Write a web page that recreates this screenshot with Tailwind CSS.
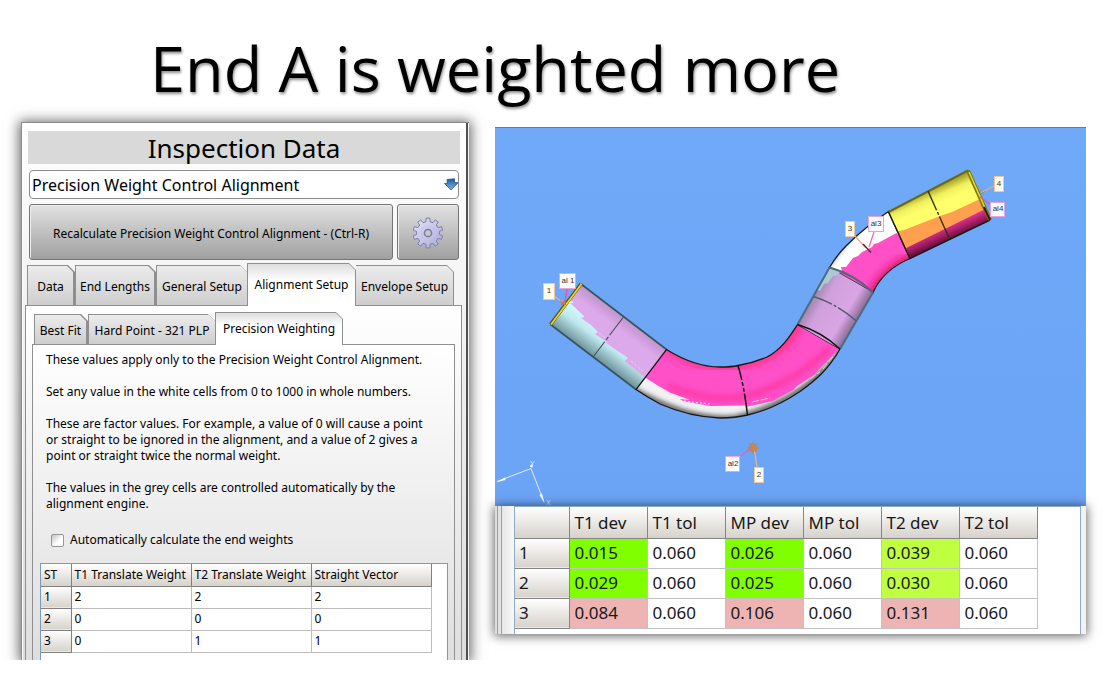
<!DOCTYPE html>
<html lang="en">
<head>
    <meta charset="UTF-8">
    <meta name="viewport" content="width=device-width, initial-scale=1.0">
    <title>End A is weighted more</title>
    <script src="https://cdn.jsdelivr.net/npm/@tailwindcss/browser@4"></script>
</head>
<body class="bg-white text-black font-['Noto_Sans','DejaVu_Sans_Condensed',sans-serif] overflow-hidden">
    <h1 class="pt-6 pl-[150px] h-[122px] whitespace-nowrap font-['Open_Sans',sans-serif] text-[63px] leading-[88px] [text-shadow:1px_2px_3px_rgba(0,0,0,0.45)]">End A is weighted more</h1>

    <main class="flex items-start pl-[21px] pr-5 gap-[26px]">
        <!-- Inspection panel -->
        <section class="w-[448px] shrink-0 h-[538px] overflow-hidden bg-linear-to-b from-white to-[#dcdcdc] border-t border-l border-[#8a8a8a] shadow-[0_1px_12px_2px_rgba(0,0,0,0.6)] flex">
            <div class="flex-1 min-w-0 border-l border-white pt-2 pl-[2px] pr-1 flex flex-col">
                <h2 class="ml-[3px] mr-[2px] h-[33px] bg-[#d9d9d9] text-center text-[26px] leading-[34px]">Inspection Data</h2>
                <div class="relative mt-[6px] ml-1 mr-[3px]">
                    <select aria-label="Alignment type" class="appearance-none block w-full h-[29px] rounded border border-[#8c8c8c] bg-white pl-[2px] text-[16px]">
                        <option>Precision Weight Control Alignment</option>
                    </select>
                    <svg class="absolute right-0 top-2 w-4 h-[13px] pointer-events-none" viewBox="0 0 16 13">
                        <defs><linearGradient id="arrow" x2="0" y2="1"><stop stop-color="#1d5a9c"/><stop offset="1" stop-color="#7cb8ea"/></linearGradient></defs>
                        <path d="M4 1.500 L11.500 .8 L11.500 4.500 L15 4.800 L8 12 L1.500 5.500 L4.500 5 Z" fill="url(#arrow)" stroke="#1f4f8a" stroke-width=".8"/>
                    </svg>
                </div>
                <div class="mt-[5px] ml-1 mr-[3px] flex gap-1">
                    <button class="flex-1 h-14 pt-[3px] rounded-[3px] border border-[#747474] bg-linear-to-b from-[#e2e2e2] to-[#a0a0a0] text-[12px] shadow-[inset_1px_1px_0_#eee] whitespace-nowrap">Recalculate Precision Weight Control Alignment - (Ctrl-R)</button>
                    <button aria-label="Settings" class="w-[62px] h-14 pt-[2px] rounded-[3px] border border-[#747474] bg-linear-to-b from-[#e2e2e2] to-[#a0a0a0] shadow-[inset_1px_1px_0_#eee] flex items-center justify-center">
                        <svg class="w-8 h-8" viewBox="-16 -16 32 32">
                            <defs><linearGradient id="gear" x1="0" y1="0" x2="1" y2="1"><stop stop-color="#e4e4fa"/><stop offset="1" stop-color="#a8a8da"/></linearGradient></defs>
                            <path id="gearShape" fill="url(#gear)" stroke="#8080ac" stroke-width="1" stroke-linejoin="round"/>
                            <circle r="7" fill="none" stroke="#c4c4ea" stroke-width="1"/>
                            <circle r="3.600" fill="#c8c8c8" stroke="#7b7ba0" stroke-width="1.500"/>
                        </svg>
                    </button>
                </div>

                <div class="mt-[3px] ml-[2px] flex items-end text-[12px] relative z-10 -mb-px" role="tablist">
                    <button role="tab" class="w-12 h-[41px] pt-px pl-px pr-[2px] pb-px bg-[#8f8f8f] [clip-path:polygon(0_0,calc(100%-7px)_0,100%_7px,100%_100%,0_100%)]"><span class="flex items-center justify-center h-full whitespace-nowrap bg-linear-to-b from-[#ececec] to-[#cecece] [clip-path:polygon(0_0,calc(100%-6px)_0,100%_6px,100%_100%,0_100%)] pt-[3px]">Data</span></button>
                    <button role="tab" class="w-[81px] h-[41px] pt-px pl-px pr-[2px] pb-px bg-[#8f8f8f] [clip-path:polygon(0_0,calc(100%-7px)_0,100%_7px,100%_100%,0_100%)]"><span class="flex items-center justify-center h-full whitespace-nowrap bg-linear-to-b from-[#ececec] to-[#cecece] [clip-path:polygon(0_0,calc(100%-6px)_0,100%_6px,100%_100%,0_100%)] pt-[3px]">End Lengths</span></button>
                    <button role="tab" class="w-[91px] h-[41px] pt-px pl-px pb-px bg-[#8f8f8f] [clip-path:polygon(0_0,calc(100%-7px)_0,100%_7px,100%_100%,0_100%)]"><span class="flex items-center justify-center h-full whitespace-nowrap bg-linear-to-b from-[#ececec] to-[#cecece] [clip-path:polygon(0_0,calc(100%-6px)_0,100%_6px,100%_100%,0_100%)] pt-[3px]">General Setup</span></button>
                    <button role="tab" aria-selected="true" class="w-[109px] h-[43px] pt-px pl-px pr-px bg-[#8f8f8f] [clip-path:polygon(0_0,calc(100%-7px)_0,100%_7px,100%_100%,0_100%)]"><span class="flex items-center justify-center h-full whitespace-nowrap bg-linear-to-b from-[#dedede] to-white to-40% [clip-path:polygon(0_0,calc(100%-6px)_0,100%_6px,100%_100%,0_100%)]">Alignment Setup</span></button>
                    <button role="tab" class="w-[98px] h-[41px] pt-px pr-px pb-px bg-[#8f8f8f] [clip-path:polygon(0_0,calc(100%-7px)_0,100%_7px,100%_100%,0_100%)]"><span class="flex items-center justify-center h-full whitespace-nowrap bg-linear-to-b from-[#ececec] to-[#cecece] [clip-path:polygon(0_0,calc(100%-6px)_0,100%_6px,100%_100%,0_100%)] pt-[3px]">Envelope Setup</span></button>
                </div>

                <div class="flex-1 border-t border-l border-r border-[#8f8f8f] bg-linear-to-b from-white to-[#dcdcdc] pt-[6px] px-[6px] flex flex-col">
                    <div class="ml-[2px] flex items-end text-[12px] relative z-10 -mb-px" role="tablist">
                        <button role="tab" class="w-[54px] h-[31px] pt-px pl-px pr-[2px] pb-px bg-[#8f8f8f] [clip-path:polygon(0_0,calc(100%-7px)_0,100%_7px,100%_100%,0_100%)]"><span class="flex items-center justify-center h-full whitespace-nowrap bg-linear-to-b from-[#ececec] to-[#cecece] [clip-path:polygon(0_0,calc(100%-6px)_0,100%_6px,100%_100%,0_100%)] pt-[3px]">Best Fit</span></button>
                        <button role="tab" class="w-[127px] h-[31px] pt-px pl-px pb-px bg-[#8f8f8f] [clip-path:polygon(0_0,calc(100%-7px)_0,100%_7px,100%_100%,0_100%)]"><span class="flex items-center justify-center h-full whitespace-nowrap bg-linear-to-b from-[#ececec] to-[#cecece] [clip-path:polygon(0_0,calc(100%-6px)_0,100%_6px,100%_100%,0_100%)] pt-[3px]">Hard Point - 321 PLP</span></button>
                        <button role="tab" aria-selected="true" class="w-32 h-[33px] pt-px pl-px pr-px bg-[#8f8f8f] [clip-path:polygon(0_0,calc(100%-7px)_0,100%_7px,100%_100%,0_100%)]"><span class="flex items-center justify-center h-full whitespace-nowrap bg-linear-to-b from-[#dedede] to-white to-40% [clip-path:polygon(0_0,calc(100%-6px)_0,100%_6px,100%_100%,0_100%)]">Precision Weighting</span></button>
                    </div>
                    <div class="flex-1 border-t border-l border-r border-[#8f8f8f] bg-linear-to-b from-white to-[#dcdcdc] pt-[7px] pl-[7px] pr-[6px]">
                        <div class="pl-[6px] text-[12px] leading-4 space-y-4">
                            <p>These values apply only to the Precision Weight Control Alignment.</p>
                            <p>Set any value in the white cells from 0 to 1000 in whole numbers.</p>
                            <p>These are factor values. For example, a value of 0 will cause a point<br>or straight to be ignored in the alignment, and a value of 2 gives a<br>point or straight twice the normal weight.</p>
                            <p>The values in the grey cells are controlled automatically by the<br>alignment engine.</p>
                        </div>
                        <label class="mt-5 ml-[11px] flex items-center gap-[6px] text-[12px] leading-4">
                            <input type="checkbox" class="appearance-none size-[13px] rounded-[2px] border border-[#969696] bg-linear-to-br from-[#c4c4c4] to-white to-60%">
                            Automatically calculate the end weights
                        </label>
                        <div class="mt-[15px] h-[120px] border border-[#7c9ab8] bg-white text-[12px]">
                            <table class="table-fixed w-[390px] border-collapse text-left whitespace-nowrap">
                                <colgroup><col class="w-[30px]"><col class="w-[120px]"><col class="w-[120px]"><col class="w-[120px]"></colgroup>
                                <thead>
                                    <tr class="h-[22px] bg-linear-to-b from-white to-[#d6d2cb]">
                                        <th class="font-normal p-0 pl-[3px] border-r border-b border-[#808080]">ST</th>
                                        <th class="font-normal p-0 pl-[3px] border-r border-b border-[#808080]">T1 Translate Weight</th>
                                        <th class="font-normal p-0 pl-[3px] border-r border-b border-[#808080]">T2 Translate Weight</th>
                                        <th class="font-normal p-0 pl-[3px] border-r border-b border-[#808080]">Straight Vector</th>
                                    </tr>
                                </thead>
                                <tbody>
                                    <tr class="h-[22px]">
                                        <th class="font-normal p-0 pl-[3px] border-r border-b border-[#808080] bg-linear-to-b from-white to-[#d6d2cb]">1</th>
                                        <td class="p-0 pl-[3px] border-r border-b border-[#bdbdbd]">2</td>
                                        <td class="p-0 pl-[3px] border-r border-b border-[#bdbdbd]">2</td>
                                        <td class="p-0 pl-[3px] border-r border-b border-[#bdbdbd]">2</td>
                                    </tr>
                                    <tr class="h-[22px]">
                                        <th class="font-normal p-0 pl-[3px] border-r border-b border-[#808080] bg-linear-to-b from-white to-[#d6d2cb]">2</th>
                                        <td class="p-0 pl-[3px] border-r border-b border-[#bdbdbd]">0</td>
                                        <td class="p-0 pl-[3px] border-r border-b border-[#bdbdbd]">0</td>
                                        <td class="p-0 pl-[3px] border-r border-b border-[#bdbdbd]">0</td>
                                    </tr>
                                    <tr class="h-[22px]">
                                        <th class="font-normal p-0 pl-[3px] border-r border-b border-[#808080] bg-linear-to-b from-white to-[#d6d2cb]">3</th>
                                        <td class="p-0 pl-[3px] border-r border-b border-[#bdbdbd]">0</td>
                                        <td class="p-0 pl-[3px] border-r border-b border-[#bdbdbd]">1</td>
                                        <td class="p-0 pl-[3px] border-r border-b border-[#bdbdbd]">1</td>
                                    </tr>
                                </tbody>
                            </table>
                        </div>
                    </div>
                </div>
            </div>
            <div class="w-[3px] border-l-2 border-[#505050] bg-[#f4f4f4]"></div>
        </section>

        <!-- Tube view and results -->
        <section class="flex-1 min-w-0 mt-[5px]">
            <svg class="block w-full" viewBox="495 127 591 379" font-family="Liberation Sans, sans-serif" font-size="8">
                <defs>
                    <linearGradient id="sky" x2="0" y2="1"><stop stop-color="#70a9f8"/><stop offset="1" stop-color="#6ca4f5"/></linearGradient>
                    <linearGradient id="lilac" gradientUnits="userSpaceOnUse" x1="623" y1="317" x2="593" y2="357"><stop stop-color="#c295cc"/><stop offset=".25" stop-color="#dca9ea"/><stop offset=".75" stop-color="#dca9ea"/><stop offset="1" stop-color="#a87fb0"/></linearGradient>
                    <linearGradient id="ice" gradientUnits="userSpaceOnUse" x1="623" y1="317" x2="593" y2="357"><stop offset=".4" stop-color="#d2fbff"/><stop offset=".65" stop-color="#c0e9ef"/><stop offset="1" stop-color="#6d9099"/></linearGradient>
                    <linearGradient id="lilac2" gradientUnits="userSpaceOnUse" x1="813" y1="296" x2="856" y2="321"><stop stop-color="#9f82ab"/><stop offset=".25" stop-color="#d0a0dc"/><stop offset=".75" stop-color="#d8a6e4"/><stop offset="1" stop-color="#8d6c98"/></linearGradient>
                    <linearGradient id="lemon" gradientUnits="userSpaceOnUse" x1="928" y1="191" x2="949" y2="239"><stop stop-color="#a8a52c"/><stop offset=".15" stop-color="#f0ee5c"/><stop offset=".3" stop-color="#ffff6c"/></linearGradient>
                    <linearGradient id="wine" gradientUnits="userSpaceOnUse" x1="928" y1="191" x2="949" y2="239"><stop offset=".72" stop-color="#f8379a"/><stop offset="1" stop-color="#6e0f40"/></linearGradient>
                    <linearGradient id="whiteBend" gradientUnits="userSpaceOnUse" x1="843" y1="238" x2="866" y2="256"><stop stop-color="#a8a8a8"/><stop offset=".4" stop-color="#fff"/></linearGradient>
                    <filter id="soft" x="-10%" y="-10%" width="120%" height="120%"><feGaussianBlur stdDeviation="4"/></filter>
                    <filter id="softer" x="-10%" y="-10%" width="120%" height="120%"><feGaussianBlur stdDeviation="2.500"/></filter>
                    <path id="bendA" d="M666.5 349.5 C685 361 702 367 720 367 Q732 367 738 365.5 Q753 363 767 357 C782 349 790 336 797.5 324.5 L840 349 C828 370 816 380 800 391.5 Q774 409 747.5 415 Q735 418 720 418 Q690 417 660 404 Q647 397 636 389.5 Z"/>
                    <path id="bendB" d="M829.5 267.5 Q837 255 846.5 245.5 Q865 227 888.5 211.5 L910 258.5 Q883 270 873 292.5 Z"/>
                    <clipPath id="clipA"><use href="#bendA"/></clipPath>
                    <clipPath id="clipB"><use href="#bendB"/></clipPath>
                </defs>
                <rect x="495" y="127" width="591" height="379" fill="url(#sky)"/>
                <path d="M495 127.500H1086" stroke="#4c80c8" stroke-width="1"/>

                <!-- straight 1 -->
                <path d="M581 284 L666.500 349.500 L636 389.500 L550.500 324.500 Z" fill="url(#lilac)"/>
                <path d="M569 299 L574 303 L570 303 L584.500 316.500 L581 318 L591 325 L598 332 L595 334 L607 342 L606 343 L628 358 L624.500 361 L645 377.500 L636 389.500 L550.500 324.500 Z" fill="url(#ice)"/>
                <path d="M599 333 L606 338 M631 361 L643 371" stroke="#e8d8f2" stroke-width=".8" stroke-dasharray="3 1.500"/>
                <path d="M581 284 L666.500 349.500 M550.500 324.500 L636 389.500" stroke="#31565f" stroke-width="1.600"/>
                <path d="M623.500 317 L612 332 M603 344 L593.500 356.500" stroke="#46525c" stroke-width="1.200"/>
                <path d="M612 332 L603 344" stroke="#46525c" stroke-width="1.200" stroke-dasharray="4 2"/>
                <path d="M581 284 L550.500 324.500" stroke="#4c4b18" stroke-width="3.400"/>
                <path d="M581.500 284 L551 324.500" stroke="#f0d81c" stroke-width="1.800"/>

                <!-- bend 1 -->
                <use href="#bendA" fill="#f2f2f2"/>
                <g clip-path="url(#clipA)">
                    <path d="M634 390 Q690 422 735 418 Q804 402 842 349" fill="none" stroke="#484848" stroke-width="5" filter="url(#softer)"/>
                    <path d="M660 345 L645 377.500 Q658 386 670 392.500 L690 400 L680 399 L683 401 L710 406 L747 405.500 L745 407 L773 401 L793 390 L797 386 L814 375 L827 361 L839 349 L797 320 L780 330 L720 360 Z" fill="#ff50c8"/>
                    <path d="M664 345 Q695 364 720 365 Q780 364 798 322" fill="none" stroke="#ff2c78" stroke-width="9" filter="url(#soft)"/>
                    <path d="M668 386 Q704 400 735 398 Q790 388 830 348" fill="none" stroke="#ff3098" stroke-width="6" opacity=".7" filter="url(#softer)"/>
                    <path d="M752 402 L770 398 M795 389 L820 372 M823 369 L835 354" stroke="#f2c6d9" stroke-width="1" stroke-dasharray="7 2"/>
                    <path d="M684 401 L710 404" stroke="#ffe3f2" stroke-width="1" stroke-dasharray="2 2"/>
                </g>
                <use href="#bendA" fill="none" stroke="#171717" stroke-width="1.300"/>
                <path d="M738 365.500 Q744 385 747.500 415" fill="none" stroke="#111" stroke-width="1.500" stroke-dasharray="15 2 4 2 4 2 30"/>

                <!-- bend 2 -->
                <use href="#bendB" fill="url(#whiteBend)"/>
                <g clip-path="url(#clipB)">
                    <path d="M836 273 L842 271 L841 267 L846 267 L853 258 L858 256 L862 252 L872 247 L874 244 L878 243 L896.500 233 L915 255 L880 297 Z" fill="#ff50c8"/>
                    <path d="M872 298 Q884 272 914 258" fill="none" stroke="#e01868" stroke-width="12" filter="url(#soft)"/>
                </g>
                <use href="#bendB" fill="none" stroke="#171717" stroke-width="1.300"/>

                <!-- straight 2 -->
                <path d="M829.500 267.500 L873 292.500 L840 349 L797.500 324.500 Z" fill="url(#lilac2)"/>
                <path d="M829.500 267.500 L841 271 L836 276 L833 276 L828 283 L824 284 L820 291 L818 290 L813.500 296.500 Z" fill="#a9cbd4"/>
                <path d="M829.500 267.500 L797.500 324.500 M873 292.500 L840 349" stroke="#4b6d80" stroke-width="2"/>
                <path d="M829.500 267.500 Q854 274 873 292.500" fill="none" stroke="#4b6a78" stroke-width="2"/>
                <path d="M813.500 296.500 Q837 304 856.500 321" fill="none" stroke="#4e5d70" stroke-width="1.400" stroke-dasharray="20 2 3 2 40"/>
                <path d="M797.500 324.500 Q822 332 840 349" fill="none" stroke="#111" stroke-width="1.500"/>

                <!-- straight 3 -->
                <path d="M888.500 212 L968 170.500 L990 220 L910 258.500 Z" fill="url(#lemon)"/>
                <path d="M897 231.500 L904 230 L940 216 L952 212 L980 199 L985 209 L906 248 Z" fill="#ffa050"/>
                <path d="M906 248 L985 209 L990 220 L910 258.500 Z" fill="url(#wine)"/>
                <path d="M888.500 212 L968 170.500" stroke="#6a6a12" stroke-width="2"/>
                <path d="M888.500 212 L910 258.500 L990 220" fill="none" stroke="#191919" stroke-width="1.500"/>
                <path d="M928 191 L949.500 239" stroke="#33300a" stroke-width="1.400" stroke-dasharray="21 2 3 2 40"/>
                <path d="M968 170.500 L990 220" stroke="#77760a" stroke-width="4"/>
                <path d="M969 172 L989 217" stroke="#eae51e" stroke-width="1.400"/>
                <path d="M984 207 L990 220" stroke="#3a1620" stroke-width="2"/>

                <!-- leaders -->
                <g fill="none" stroke-width="1.200">
                    <path d="M554 296 L565 304" stroke="#f0a890"/>
                    <path d="M567 289 L565 303" stroke="#f050a0"/>
                    <path d="M560 301 L566 305 M561 305 L566 300" stroke="#d8742c"/>
                    <path d="M854 235 L866 248" stroke="#f0a080"/>
                    <path d="M863 244 L871 252.500" stroke="#402820"/>
                    <path d="M874 232 L869 247" stroke="#ff58b4"/>
                    <path d="M994 186 L981 192.500" stroke="#f0a880"/>
                    <path d="M990 204 L980 197" stroke="#f050a0"/>
                    <path d="M741 456 L752 447" stroke="#e060b8"/>
                    <path d="M757 467 L754 448" stroke="#f0b090"/>
                </g>
                <g fill="none" stroke="#d08238" stroke-width="1">
                    <circle cx="753" cy="447.500" r="4"/><ellipse cx="753" cy="447.500" rx="2" ry="4"/>
                    <path d="M747 448 H759 M753 441 V454 M749 443 L757 452 M757 443 L749 452"/>
                    <path d="M980 190 L984 195 M980 196 L985 191"/>
                </g>

                <!-- labels -->
                <g fill="#fffdea" stroke="#eec8a0" stroke-width="1">
                    <rect x="543.500" y="283.500" width="11" height="16"/>
                    <rect x="845.500" y="221.500" width="9" height="15"/>
                    <rect x="994.500" y="176.500" width="9" height="15"/>
                    <rect x="754.500" y="467.500" width="9" height="15"/>
                </g>
                <g fill="#fffaff" stroke="#e4a4dc" stroke-width="1">
                    <rect x="559.500" y="273.500" width="16" height="15"/>
                    <rect x="868.500" y="216.500" width="15" height="15"/>
                    <rect x="990.500" y="202.500" width="14" height="14"/>
                    <rect x="725.500" y="456.500" width="14" height="15"/>
                </g>
                <g fill="#333" text-anchor="middle">
                    <text x="549" y="293">1</text>
                    <text x="568" y="283">al 1</text>
                    <text x="850" y="231">3</text>
                    <text x="876" y="226">al3</text>
                    <text x="999" y="186">4</text>
                    <text x="998" y="211">al4</text>
                    <text x="759" y="477">2</text>
                    <text x="733" y="466">al2</text>
                </g>

                <!-- axes -->
                <path d="M531 468.500 L497 481.500 M531 468.500 L544 502" fill="none" stroke="#dfeaff" stroke-width="1"/>
                <path d="M496 482.500 L505 477.500 L505.500 480 Z M544.500 503 L539.500 495 L542 493.500 Z" fill="#f4f8ff"/>
                <circle cx="531.500" cy="466" r="1.500" fill="#eef4ff"/>
                <g fill="#dfeaff" font-size="7"><text x="530" y="466">Y</text><text x="546" y="505">X</text></g>
            </svg>

            <div class="relative h-[128px] bg-[#f2f2f2] shadow-[0_1px_10px_1px_rgba(0,0,0,0.6)] flex">
                <div class="w-[19px] flex gap-[3px] pl-[2px] bg-linear-to-r from-[#dcdcdc] to-[#f8f8f8]">
                    <div class="w-px bg-[#9c9c9c]"></div>
                    <div class="w-px bg-[#9c9c9c]"></div>
                </div>
                <div class="flex-1 border-l border-r border-t border-[#8faac4] bg-white text-[17px] text-[#181818]">
                    <table class="table-fixed w-[522px] border-collapse text-left whitespace-nowrap">
                        <colgroup><col class="w-[54px]"><col class="w-[78px]"><col class="w-[78px]"><col class="w-[78px]"><col class="w-[78px]"><col class="w-[78px]"><col class="w-[78px]"></colgroup>
                        <thead>
                            <tr class="h-[31px] bg-linear-to-b from-white to-[#d6d2cb]">
                                <th class="p-0 border-r border-b border-[#858585]"></th>
                                <th class="font-normal p-0 pl-[5px] border-r border-b border-[#858585]">T1 dev</th>
                                <th class="font-normal p-0 pl-[5px] border-r border-b border-[#858585]">T1 tol</th>
                                <th class="font-normal p-0 pl-[5px] border-r border-b border-[#858585]">MP dev</th>
                                <th class="font-normal p-0 pl-[5px] border-r border-b border-[#858585]">MP tol</th>
                                <th class="font-normal p-0 pl-[5px] border-r border-b border-[#858585]">T2 dev</th>
                                <th class="font-normal p-0 pl-[5px] border-r border-b border-[#858585]">T2 tol</th>
                            </tr>
                        </thead>
                        <tbody>
                            <tr class="h-[30px]">
                                <th class="font-normal p-0 pl-1 border-r border-b border-[#858585] bg-linear-to-b from-white to-[#d6d2cb]">1</th>
                                <td class="p-0 pl-[5px] border-r border-b border-[#c2c2c2] bg-[#80ff00]">0.015</td>
                                <td class="p-0 pl-[5px] border-r border-b border-[#c2c2c2]">0.060</td>
                                <td class="p-0 pl-[5px] border-r border-b border-[#c2c2c2] bg-[#80ff00]">0.026</td>
                                <td class="p-0 pl-[5px] border-r border-b border-[#c2c2c2]">0.060</td>
                                <td class="p-0 pl-[5px] border-r border-b border-[#c2c2c2] bg-[#bfff40]">0.039</td>
                                <td class="p-0 pl-[5px] border-r border-b border-[#c2c2c2]">0.060</td>
                            </tr>
                            <tr class="h-[30px]">
                                <th class="font-normal p-0 pl-1 border-r border-b border-[#858585] bg-linear-to-b from-white to-[#d6d2cb]">2</th>
                                <td class="p-0 pl-[5px] border-r border-b border-[#c2c2c2] bg-[#80ff00]">0.029</td>
                                <td class="p-0 pl-[5px] border-r border-b border-[#c2c2c2]">0.060</td>
                                <td class="p-0 pl-[5px] border-r border-b border-[#c2c2c2] bg-[#80ff00]">0.025</td>
                                <td class="p-0 pl-[5px] border-r border-b border-[#c2c2c2]">0.060</td>
                                <td class="p-0 pl-[5px] border-r border-b border-[#c2c2c2] bg-[#bfff40]">0.030</td>
                                <td class="p-0 pl-[5px] border-r border-b border-[#c2c2c2]">0.060</td>
                            </tr>
                            <tr class="h-[30px]">
                                <th class="font-normal p-0 pl-1 border-r border-b border-[#858585] bg-linear-to-b from-white to-[#d6d2cb]">3</th>
                                <td class="p-0 pl-[5px] border-r border-b border-[#c2c2c2] bg-[#eeb4b4]">0.084</td>
                                <td class="p-0 pl-[5px] border-r border-b border-[#c2c2c2]">0.060</td>
                                <td class="p-0 pl-[5px] border-r border-b border-[#c2c2c2] bg-[#eeb4b4]">0.106</td>
                                <td class="p-0 pl-[5px] border-r border-b border-[#c2c2c2]">0.060</td>
                                <td class="p-0 pl-[5px] border-r border-b border-[#c2c2c2] bg-[#eeb4b4]">0.131</td>
                                <td class="p-0 pl-[5px] border-r border-b border-[#c2c2c2]">0.060</td>
                            </tr>
                        </tbody>
                    </table>
                </div>
                <div class="w-[5px]"></div>
            </div>
        </section>
    </main>

    <script>
        // gear outline
        const TEETH = 10;
        const points = [];
        for (let i = 0; i < TEETH; i++) {
            [[-0.28, 11.5], [-0.2, 15], [0.2, 15], [0.28, 11.5]].forEach(([offset, radius]) => {
                const angle = (i + offset) * 2 * Math.PI / TEETH;
                points.push((Math.sin(angle) * radius).toFixed(1) + ' ' + (-Math.cos(angle) * radius).toFixed(1));
            });
        }
        document.getElementById('gearShape').setAttribute('d', 'M' + points.join('L') + 'Z');
    </script>
</body>
</html>
